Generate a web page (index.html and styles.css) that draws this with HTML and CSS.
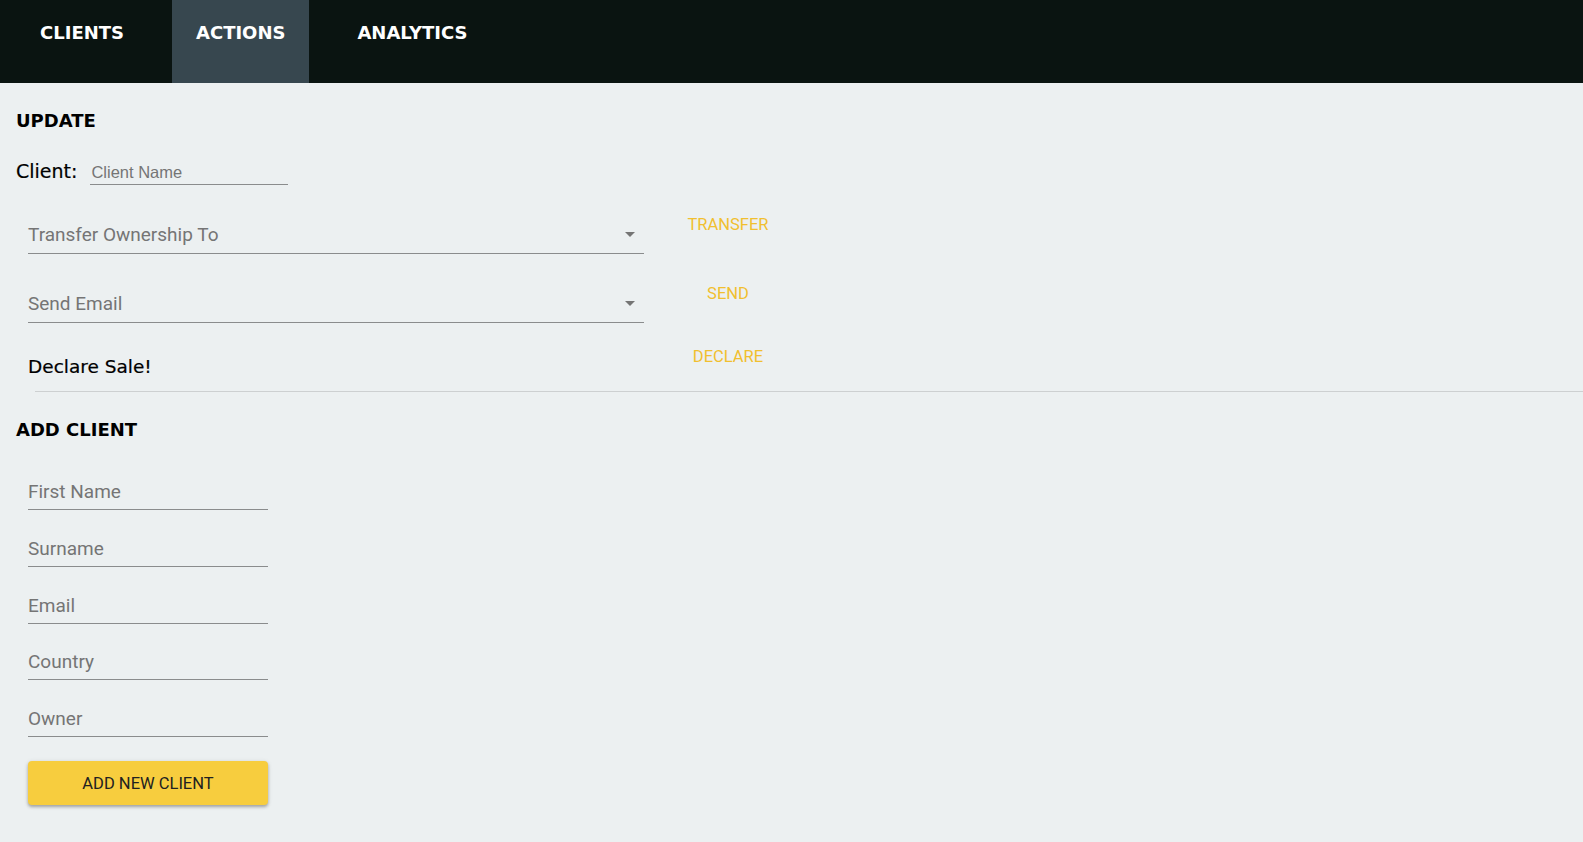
FILE: index.html
```html
<!DOCTYPE html>
<html lang="en">
<head>
<meta charset="utf-8">
<title>Actions</title>
<link rel="stylesheet" href="styles.css">
</head>
<body>
<nav class="nav">
  <a class="tab">CLIENTS</a>
  <a class="tab active">ACTIONS</a>
  <a class="tab">ANALYTICS</a>
</nav>
<main class="main">
  <section class="update">
    <h2 class="heading">UPDATE</h2>
    <div class="client-row">
      <span class="label">Client:</span>
      <input class="client-input" type="text" placeholder="Client Name">
    </div>
    <div class="action-row first">
      <div class="select">
        <span class="select-text">Transfer Ownership To</span>
        <svg class="arrow" width="10" height="5" viewBox="0 0 10 5"><path d="M0 0h10L5 5z" fill="#757575"/></svg>
      </div>
      <button class="flat-btn">TRANSFER</button>
    </div>
    <div class="action-row">
      <div class="select">
        <span class="select-text">Send Email</span>
        <svg class="arrow" width="10" height="5" viewBox="0 0 10 5"><path d="M0 0h10L5 5z" fill="#757575"/></svg>
      </div>
      <button class="flat-btn">SEND</button>
    </div>
    <div class="action-row declare-row">
      <div class="declare-label">Declare Sale!</div>
      <button class="flat-btn">DECLARE</button>
    </div>
  </section>
  <hr class="divider">
  <section class="add">
    <h2 class="heading">ADD CLIENT</h2>
    <div class="fields">
      <input class="field" type="text" placeholder="First Name">
      <input class="field" type="text" placeholder="Surname">
      <input class="field" type="text" placeholder="Email">
      <input class="field" type="text" placeholder="Country">
      <input class="field" type="text" placeholder="Owner">
    </div>
    <button class="raised-btn">ADD NEW CLIENT</button>
  </section>
</main>
</body>
</html>
```
FILE: styles.css
```css
html, body {
  margin: 0;
  padding: 0;
  background: #ecf0f1;
}

body {
  font-family: Roboto, "Liberation Sans", Arial, sans-serif;
  min-height: 842px;
}

.nav {
  display: flex;
  gap: 24px;
  height: 83px;
  padding-left: 16px;
  background: #0a1411;
  box-sizing: border-box;
}

.tab {
  display: block;
  padding: 22px 24px 0;
  font-family: "DejaVu Sans", sans-serif;
  font-weight: bold;
  font-size: 18px;
  line-height: 21px;
  color: #ffffff;
  cursor: pointer;
}

.tab.active {
  background: #37474f;
}

.main {
  padding-left: 16px;
}

.heading {
  margin: 0;
  font-family: "DejaVu Sans", sans-serif;
  font-weight: bold;
  font-size: 18px;
  line-height: 21px;
  color: #000000;
}

.update .heading {
  padding-top: 27px;
}

.client-row {
  display: flex;
  align-items: baseline;
  gap: 13px;
  margin-top: 30px;
}

.label {
  font-family: "DejaVu Sans", sans-serif;
  font-size: 19px;
  line-height: 21px;
  color: #000;
  -webkit-text-stroke: 0.2px #000;
}

.client-input {
  width: 197px;
  margin: 0;
  padding: 0 0 2px 1px;
  border: none;
  border-bottom: 1px solid #8a8c8d;
  background: transparent;
  font-family: "Liberation Sans", Arial, sans-serif;
  font-size: 16.5px;
  line-height: 19px;
  height: 19px;
  box-sizing: content-box;
  outline: none;
}

.client-input::placeholder {
  color: #757575;
}

.action-row {
  display: flex;
  align-items: flex-start;
  gap: 36px;
  margin-left: 12px;
  margin-top: 30px;
}

.select {
  width: 616px;
  height: 39px;
  box-sizing: border-box;
  border-bottom: 1px solid #8a8c8d;
  padding-bottom: 7px;
  display: flex;
  align-items: flex-end;
  justify-content: space-between;
}

.select-text {
  font-size: 19px;
  line-height: 22px;
  color: #757575;
}

.arrow {
  align-self: flex-end;
  margin: 0 9px 9px 0;
}

.flat-btn {
  width: 96px;
  margin: 0;
  padding: 0;
  border: none;
  background: transparent;
  font-family: Roboto, sans-serif;
  font-size: 16.5px;
  line-height: 20px;
  color: #f1bf2f;
  text-align: center;
  cursor: pointer;
}

.declare-row {
  margin-top: 24px;
}

.declare-label {
  width: 616px;
  padding-top: 9px;
  font-family: "DejaVu Sans", sans-serif;
  font-size: 18.5px;
  line-height: 21px;
  color: #000;
  -webkit-text-stroke: 0.2px #000;
}

.divider {
  margin: 14px 0 0 19px;
  border: none;
  border-top: 1px solid #cdd0d1;
  height: 0;
}

.add .heading {
  padding-top: 27px;
}

.fields {
  display: flex;
  flex-direction: column;
  gap: 27.8px;
  margin: 41px 0 0 12px;
}

.field {
  width: 240px;
  height: 22px;
  margin: 0;
  padding: 0 0 6px 0;
  border: none;
  border-bottom: 1px solid #8a8c8d;
  background: transparent;
  font-family: Roboto, sans-serif;
  font-size: 19px;
  line-height: 22px;
  box-sizing: content-box;
  outline: none;
}

.field::placeholder {
  color: #757575;
}

.raised-btn {
  display: block;
  width: 240px;
  height: 44px;
  margin: 24.3px 0 0 12px;
  border: none;
  border-radius: 4px;
  background: #f7cd3e;
  box-shadow: 0 2px 3px rgba(0, 0, 0, 0.25), 0 1px 5px rgba(0, 0, 0, 0.12);
  font-family: Roboto, sans-serif;
  font-size: 16.5px;
  color: #212121;
  cursor: pointer;
}
```
